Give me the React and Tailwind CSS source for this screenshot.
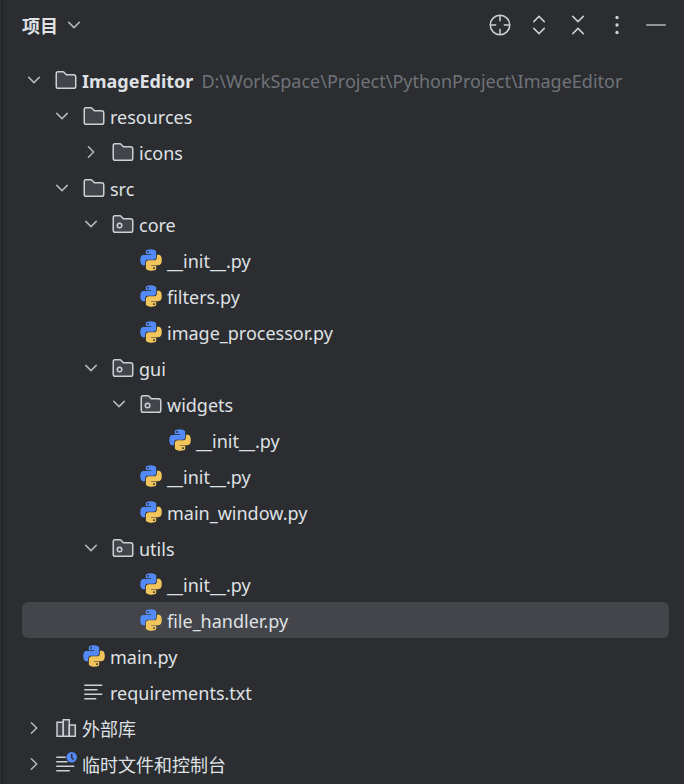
import React, { useState } from 'react';
import clsx from 'clsx';

const TREE = [
  {
    name: 'ImageEditor',
    icon: 'folder',
    path: 'D:\\WorkSpace\\Project\\PythonProject\\ImageEditor',
    open: true,
    children: [
      {
        name: 'resources',
        icon: 'folder',
        open: true,
        children: [{ name: 'icons', icon: 'folder', children: [] }],
      },
      {
        name: 'src',
        icon: 'folder',
        open: true,
        children: [
          {
            name: 'core',
            icon: 'package',
            open: true,
            children: [
              { name: '__init__.py', icon: 'python' },
              { name: 'filters.py', icon: 'python' },
              { name: 'image_processor.py', icon: 'python' },
            ],
          },
          {
            name: 'gui',
            icon: 'package',
            open: true,
            children: [
              {
                name: 'widgets',
                icon: 'package',
                open: true,
                children: [{ name: '__init__.py', icon: 'python' }],
              },
              { name: '__init__.py', icon: 'python' },
              { name: 'main_window.py', icon: 'python' },
            ],
          },
          {
            name: 'utils',
            icon: 'package',
            open: true,
            children: [
              { name: '__init__.py', icon: 'python' },
              { name: 'file_handler.py', icon: 'python' },
            ],
          },
        ],
      },
      { name: 'main.py', icon: 'python' },
      { name: 'requirements.txt', icon: 'text' },
    ],
  },
  { name: '外部库', icon: 'library', children: [] },
  { name: '临时文件和控制台', icon: 'scratch', children: [] },
];

const INDENT = ['pl-0', 'pl-[28px]', 'pl-[57px]', 'pl-[85px]', 'pl-[114px]'];

const Icon = ({ children, className = 'text-[#ced0d6]' }) => (
  <svg viewBox="0 0 16 16" fill="none" stroke="currentColor" className={clsx('w-6 h-6 shrink-0', className)} aria-hidden="true">
    {children}
  </svg>
);

const Chevron = ({ open }) => (
  <Icon className="text-[#b4b8bf]">
    <path d={open ? 'M4.5 6.25L8 9.75L11.5 6.25' : 'M6.25 4.5L9.75 8L6.25 11.5'} strokeLinecap="round" />
  </Icon>
);

const FOLDER_PATH =
  'M8.106 4.346L8.253 4.5H13C13.828 4.5 14.5 5.172 14.5 6V12.133C14.5 12.953 13.932 13.5 13.367 13.5H2.633C2.068 13.5 1.5 12.953 1.5 12.133V3.867C1.5 3.047 2.068 2.5 2.633 2.5H6.122C6.258 2.5 6.388 2.556 6.483 2.654L8.106 4.346Z';

const FileIcon = ({ type }) => {
  if (type === 'python') {
    return (
      <svg viewBox="-1.5 -1.5 27 27" className="w-6 h-6 shrink-0" aria-hidden="true">
        <path
          fill="#548af7"
          d="M14.25.18l.9.2.73.26.59.3.45.32.34.34.25.34.16.33.1.3.04.26.02.2-.01.13V8.5l-.05.63-.13.55-.21.46-.26.38-.3.31-.33.25-.35.19-.35.14-.33.1-.3.07-.26.04-.21.02H8.77l-.69.05-.59.14-.5.22-.41.27-.33.32-.27.35-.2.36-.15.37-.1.35-.07.32-.04.27-.02.21v3.06H3.17l-.21-.03-.28-.07-.32-.12-.35-.18-.36-.26-.36-.36-.35-.46-.32-.59-.28-.73-.21-.88-.14-1.05-.05-1.23.06-1.22.16-1.04.24-.87.32-.71.36-.57.4-.44.42-.33.42-.24.4-.16.36-.1.32-.05.24-.01h.16l.06.01h8.16v-.83H6.18l-.01-2.75-.02-.37.05-.34.11-.31.17-.28.25-.26.31-.23.38-.2.44-.18.51-.15.58-.12.64-.1.71-.06.77-.04.84-.02 1.27.05zm-6.3 1.98l-.23.33-.08.41.08.41.23.34.33.22.41.09.41-.09.33-.22.23-.34.08-.41-.08-.41-.23-.33-.33-.22-.41-.09-.41.09z"
        />
        <path
          fill="#f2c55c"
          d="M21.1 6.11l.28.06.32.12.35.18.36.27.36.35.35.47.32.59.28.73.21.88.14 1.04.05 1.23-.06 1.23-.16 1.04-.24.86-.32.71-.36.57-.4.45-.42.33-.42.24-.4.16-.36.09-.32.05-.24.02-.16-.01h-8.22v.82h5.84l.01 2.76.02.36-.05.34-.11.31-.17.29-.25.25-.31.24-.38.2-.44.17-.51.15-.58.13-.64.09-.71.07-.77.04-.84.01-1.27-.04-1.07-.14-.9-.2-.73-.25-.59-.3-.45-.33-.34-.34-.25-.34-.16-.33-.1-.3-.04-.25-.02-.2.01-.13v-5.34l.05-.64.13-.54.21-.46.26-.38.3-.32.33-.24.35-.2.35-.14.33-.1.3-.06.26-.04.21-.02.13-.01h5.84l.69-.05.59-.14.5-.21.41-.28.33-.32.27-.35.2-.36.15-.36.1-.35.07-.32.04-.28.02-.21V6.07h2.09l.14.01zm-6.47 14.25l-.23.33-.08.41.08.41.23.33.33.23.41.08.41-.08.33-.23.23-.33.08-.41-.08-.41-.23-.33-.33-.23-.41-.08-.41.08z"
        />
      </svg>
    );
  }
  if (type === 'text') {
    return (
      <Icon>
        <path d="M1.5 3.5H13.5M1.5 6.5H10.3M1.5 9.5H13.5M1.5 12.5H9.5" />
      </Icon>
    );
  }
  if (type === 'library') {
    return (
      <Icon>
        <path d="M2 4.2H6.2V13.5H2V4.2Z" fill="#43454a" />
        <path d="M6.2 2.5H10.2V13.5H6.2V2.5Z" fill="#43454a" />
        <path d="M10.2 6H14.2V13.5H10.2V6Z" fill="#43454a" />
      </Icon>
    );
  }
  if (type === 'scratch') {
    return (
      <Icon>
        <path d="M1.5 3.5H7.8M1.5 6.5H9M1.5 9.5H13.5M1.5 12.5H10.5" />
        <circle cx="11.8" cy="3.5" r="3.5" fill="#548af7" stroke="none" />
        <path d="M11.8 1.3V3.8L13.1 5" stroke="#2b2d30" />
      </Icon>
    );
  }
  return (
    <Icon>
      <path d={FOLDER_PATH} fill="#43454a" />
      {type === 'package' && <circle cx="5.7" cy="9" r="1.5" />}
    </Icon>
  );
};

const TreeNode = ({ node, depth, id, selected, onSelect }) => {
  const [open, setOpen] = useState(Boolean(node.open));
  const isBranch = Boolean(node.children);

  const handleClick = () => {
    onSelect(id);
    if (isBranch) setOpen(!open);
  };

  return (
    <li>
      <button
        type="button"
        onClick={handleClick}
        aria-expanded={isBranch ? open : undefined}
        className={clsx('block w-full h-9 rounded-md text-left', selected === id && 'bg-[#43454a]')}
      >
        <span className={clsx('flex items-center h-full', INDENT[depth])}>
          {isBranch ? <Chevron open={open} /> : <span className="w-6 shrink-0" />}
          <span className="flex items-center gap-1 ml-2 whitespace-nowrap">
            <FileIcon type={node.icon} />
            <span className={clsx('pt-0.5', node.path && 'font-bold')}>{node.name}</span>
            {node.path && <span className="pt-0.5 ml-1 text-[#6f737a]">{node.path}</span>}
          </span>
        </span>
      </button>
      {isBranch && open && node.children.length > 0 && (
        <ul>
          {node.children.map((child, i) => (
            <TreeNode key={i} node={child} depth={depth + 1} id={`${id}/${child.name}`} selected={selected} onSelect={onSelect} />
          ))}
        </ul>
      )}
    </li>
  );
};

const ToolButton = ({ label, className, children }) => (
  <button type="button" aria-label={label}>
    <Icon className={className}>{children}</Icon>
  </button>
);

const App = () => {
  const [selected, setSelected] = useState('ImageEditor/src/utils/file_handler.py');

  return (
    <div className="flex min-h-screen bg-[#2b2d30] text-[#dfe1e5] text-[18px] leading-6 font-['Noto_Sans','Noto_Sans_CJK_SC',sans-serif]">
      <div className="w-[3px] shrink-0 border-r border-[#1e1f22]" />
      <div className="grow min-w-0 pl-[19px] pr-[15px]">
        <header className="flex items-center justify-between h-[50px] mb-3 pr-px">
          <button type="button" className="flex items-center gap-1 font-bold">
            <span className="pt-0.5">项目</span>
            <Chevron open />
          </button>
          <div className="flex items-center gap-[15px]">
            <ToolButton label="Select opened file">
              <circle cx="8" cy="8" r="6.5" />
              <path d="M8 1.5V5.5M8 10.5V14.5M1.5 8H5.5M10.5 8H14.5" />
            </ToolButton>
            <ToolButton label="Expand all">
              <path d="M4.5 5.75L8 2.25L11.5 5.75M4.5 10.25L8 13.75L11.5 10.25" strokeLinecap="round" />
            </ToolButton>
            <ToolButton label="Collapse all">
              <path d="M4.5 2.25L8 5.75L11.5 2.25M4.5 13.75L8 10.25L11.5 13.75" strokeLinecap="round" />
            </ToolButton>
            <ToolButton label="Options">
              <g fill="currentColor" stroke="none">
                <circle cx="8" cy="3" r="1.1" />
                <circle cx="8" cy="8" r="1.1" />
                <circle cx="8" cy="13" r="1.1" />
              </g>
            </ToolButton>
            <ToolButton label="Hide" className="text-[#b4b8bf]">
              <path d="M1.5 8H14.5" />
            </ToolButton>
          </div>
        </header>
        <ul>
          {TREE.map((node) => (
            <TreeNode key={node.name} node={node} depth={0} id={node.name} selected={selected} onSelect={setSelected} />
          ))}
        </ul>
      </div>
    </div>
  );
};

export default App;
